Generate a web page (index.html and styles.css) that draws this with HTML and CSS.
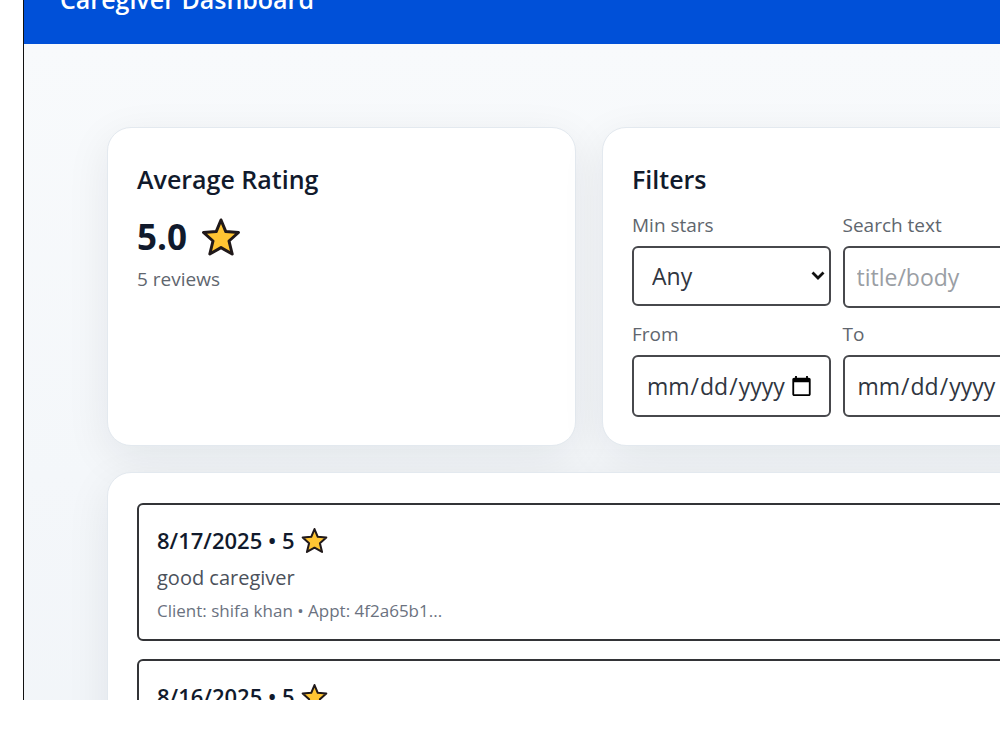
FILE: index.html
```html
<!DOCTYPE html>
<html lang="en">
<head>
<meta charset="utf-8">
<title>Caregiver Dashboard</title>
<link rel="stylesheet" href="styles.css">
</head>
<body>
<svg class="sprite" aria-hidden="true">
  <symbol id="star" viewBox="0 0 40 40">
    <path d="M20 3 24.800 14.600 37.500 15.500 28 24 31.200 37 20 30.600 8.800 37 12 24 2.500 15.500 15.200 14.600Z" fill="#ffc533" stroke="#20191a" stroke-width="3" stroke-linejoin="round"/>
  </symbol>
</svg>
<div class="frame">
  <div class="page">
    <header class="topbar"><h1 class="topbar-title">Caregiver Dashboard</h1></header>
    <main class="content">
      <section class="card">
        <h2 class="card-title">Average Rating</h2>
        <div class="score"><span>5.0</span><svg class="score-star"><use href="#star"/></svg></div>
        <p class="count">5 reviews</p>
      </section>
      <section class="card">
        <h2 class="card-title">Filters</h2>
        <form class="filters">
          <div class="field">
            <label for="stars">Min stars</label>
            <div class="select-wrap">
              <select id="stars" class="control select"><option>Any</option></select>
              <svg class="chevron" viewBox="0 0 14 9"><path d="M1.500 1.500 7 7l5.500-5.500" fill="none" stroke="#111" stroke-width="2.800"/></svg>
            </div>
          </div>
          <div class="field">
            <label for="search">Search text</label>
            <input id="search" class="control" type="text" placeholder="title/body">
          </div>
          <div class="field">
            <label for="from">From</label>
            <input id="from" class="control" type="date">
          </div>
          <div class="field">
            <label for="to">To</label>
            <input id="to" class="control" type="date">
          </div>
        </form>
      </section>
      <section class="card reviews">
        <article class="review">
          <h3 class="review-title">8/17/2025 • 5<svg class="review-star"><use href="#star"/></svg></h3>
          <p class="review-body">good caregiver</p>
          <p class="review-meta">Client: shifa khan • Appt: 4f2a65b1...</p>
        </article>
        <article class="review">
          <h3 class="review-title">8/16/2025 • 5<svg class="review-star"><use href="#star"/></svg></h3>
        </article>
      </section>
    </main>
  </div>
</div>
</body>
</html>
```
FILE: styles.css
```css
* { box-sizing: border-box; }
body {
  margin: 0;
  background: #fff;
  color: #111a2c;
  font-family: "Open Sans", "Noto Sans", sans-serif;
}
h1, h2, h3, p { margin: 0; }
.sprite { position: absolute; width: 0; height: 0; }

.frame {
  height: calc(100vh - 50px);
  margin-left: 23px;
  border-left: 1px solid #111;
  overflow: hidden;
}
.page {
  min-width: 1130px;
  min-height: 100%;
  margin-top: -46px;
  background: linear-gradient(#f8fafc 90px, #f0f4f8);
}
.topbar {
  display: flex;
  align-items: center;
  height: 90px;
  padding: 0 36px;
  background: #0050d8;
  color: #fff;
}
.topbar-title { font-size: 25px; font-weight: 600; line-height: 30px; }

.content {
  display: grid;
  grid-template-columns: repeat(2, minmax(0, 1fr));
  gap: 26px;
  padding: 83px;
}
.card {
  padding: 30px 29px 28px;
  border: 1px solid #e3e9ef;
  border-radius: 24px;
  background: #fff;
  box-shadow: 0 12px 44px rgba(15, 30, 36, 0.08);
}
.card-title { padding-top: 3px; font-size: 25px; font-weight: 600; line-height: 36px; }
.score {
  display: flex;
  align-items: center;
  gap: 14px;
  margin-top: 16px;
  font-size: 35px;
  font-weight: 700;
  line-height: 48px;
}
.score-star { width: 40px; height: 40px; }
.count { margin-top: 4px; color: #5f666e; font-size: 19px; line-height: 28px; }

.filters {
  display: grid;
  grid-template-columns: repeat(2, minmax(0, 1fr));
  gap: 12px;
  margin-top: 14px;
}
.field { display: flex; flex-direction: column; gap: 6px; }
.field label { color: #5f666e; font-size: 19px; line-height: 29px; }
.control {
  display: block;
  width: 100%;
  height: 62px;
  padding: 0 14px 0 12px;
  border: 2px solid #47484c;
  border-radius: 6px;
  background: #fff;
  color: #30363f;
  font-family: inherit;
  font-size: 23px;
}
.control::placeholder { color: #9a9ea4; opacity: 1; }
.select-wrap { position: relative; }
.select { height: 60px; padding: 0 18px; appearance: none; }
.chevron { position: absolute; right: 6px; top: 25px; width: 14px; height: 9px; pointer-events: none; }

.reviews {
  grid-column: 1 / -1;
  display: grid;
  gap: 18px;
}
.review {
  min-height: 138px;
  padding: 17px 18px 14px;
  border: 2px solid #333437;
  border-radius: 6px;
}
.review-title {
  display: flex;
  align-items: center;
  gap: 6px;
  font-size: 22px;
  font-weight: 600;
  line-height: 36px;
}
.review-star { width: 27px; height: 27px; }
.review-body { margin-top: 4px; color: #4b515b; font-size: 20px; line-height: 32px; }
.review-meta { margin-top: 3px; color: #6b7280; font-size: 17px; line-height: 28px; }
```
